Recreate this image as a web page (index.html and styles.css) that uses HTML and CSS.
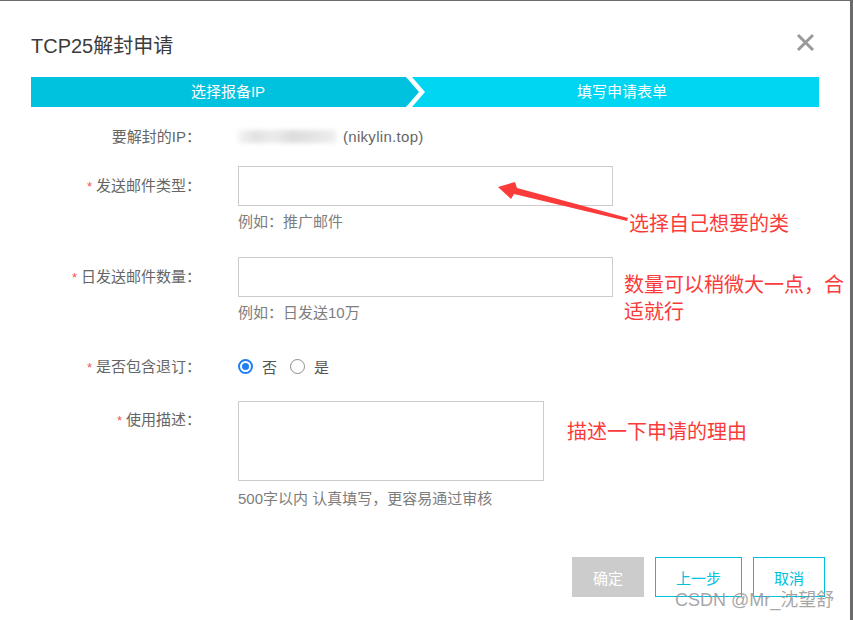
FILE: index.html
```html
<!DOCTYPE html>
<html lang="zh-CN">
<head>
<meta charset="utf-8">
<title>TCP25解封申请</title>
<link rel="stylesheet" href="styles.css">
</head>
<body>
<div class="dialog">
  <div class="header">
    <h1 class="title">TCP25解封申请</h1>
    <svg class="close" viewBox="0 0 19 19" width="19" height="19"><path d="M2 2L17 17M17 2L2 17" stroke="#9a9a9a" stroke-width="3" fill="none"/></svg>
  </div>

  <div class="steps">
    <svg class="steps-bg" width="788" height="30" viewBox="0 0 788 30">
      <polygon points="0,0 375,0 388,15 375,30 0,30" fill="#00c1de"/>
      <polygon points="375,0 381,0 394,15 381,30 375,30 388,15" fill="#ffffff"/>
    </svg>
    <div class="step">选择报备IP</div>
    <div class="step">填写申请表单</div>
  </div>

  <div class="form">
    <div class="row row-ip">
      <div class="label label-text">要解封的IP：</div>
      <div class="control control-ip"><span class="blur"></span><span class="host">(nikylin.top)</span></div>
    </div>

    <div class="row row-first">
      <div class="label"><span class="req">*</span>发送邮件类型：</div>
      <div class="control">
        <input class="input" type="text">
        <div class="hint">例如：推广邮件</div>
      </div>
    </div>

    <div class="row row-second">
      <div class="label"><span class="req">*</span>日发送邮件数量：</div>
      <div class="control">
        <input class="input" type="text">
        <div class="hint">例如：日发送10万</div>
      </div>
    </div>

    <div class="row row-radio">
      <div class="label label-text"><span class="req">*</span>是否包含退订：</div>
      <div class="control radios">
        <span class="radio checked"></span><span class="radio-text">否</span>
        <span class="radio"></span><span class="radio-text">是</span>
      </div>
    </div>

    <div class="row row-area">
      <div class="label label-area"><span class="req">*</span>使用描述：</div>
      <div class="control">
        <textarea class="textarea"></textarea>
        <div class="hint hint-area">500字以内 认真填写，更容易通过审核</div>
      </div>
    </div>
  </div>

  <div class="footer">
    <button class="btn btn-disabled">确定</button>
    <button class="btn btn-outline">上一步</button>
    <button class="btn btn-outline">取消</button>
  </div>

  <svg class="arrow" width="853" height="620" viewBox="0 1 853 620">
    <polygon points="498,188 515,183 517,189 628,219 627,222 514,195 511,200" fill="#fb3a3a"/>
  </svg>
  <div class="note note-1">选择自己想要的类</div>
  <div class="note note-2">数量可以稍微大一点，合<br>适就行</div>
  <div class="note note-3">描述一下申请的理由</div>
  <div class="watermark">CSDN @Mr_沈望舒</div>
</div>
</body>
</html>
```

FILE: styles.css
```css
html, body {
  margin: 0;
  padding: 0;
}

body {
  background: #6b6b6b;
  font-family: "Liberation Sans", "Noto Sans CJK SC", sans-serif;
  overflow: hidden;
  height: 620px;
}

.dialog {
  position: relative;
  width: 850px;
  height: 619px;
  margin-top: 1px;
  background: #ffffff;
}

.header {
  display: flex;
  justify-content: space-between;
  align-items: flex-start;
  padding: 31px 35px 0 31px;
}

.title {
  margin: 0;
  font-size: 20px;
  font-weight: normal;
  line-height: 28px;
  color: #3c3c3c;
}

.close {
  display: block;
  margin-top: 1px;
}

.steps {
  position: relative;
  display: flex;
  height: 30px;
  margin: 17px 31px 0;
  background: #00d6f2;
}

.steps-bg {
  position: absolute;
  left: 0;
  top: 0;
}

.step {
  position: relative;
  flex: 1;
  text-align: center;
  line-height: 30px;
  font-size: 15px;
  color: #ffffff;
}

.form {
  padding-top: 19px;
}

.row {
  display: flex;
  align-items: flex-start;
}

.row-first {
  margin-top: 19px;
}

.row-second {
  margin-top: 25px;
}

.row-radio {
  margin-top: 33px;
}

.row-area {
  margin-top: 24px;
}

.label {
  flex: none;
  width: 201px;
  text-align: right;
  font-size: 15px;
  line-height: 40px;
  color: #666666;
  white-space: nowrap;
}

.label-text {
  line-height: 21px;
  height: 21px;
}

.label-area {
  line-height: 20px;
  padding-top: 9px;
}

.req {
  color: #f25555;
  font-size: 13px;
  margin-right: 4px;
}

.control {
  margin-left: 37px;
}

.control-ip {
  display: flex;
  align-items: center;
  height: 21px;
  font-size: 15px;
  color: #666666;
}

.blur {
  display: inline-block;
  width: 98px;
  height: 13px;
  margin-right: 7px;
  background: linear-gradient(90deg, #f4f4f4 0%, #e2e2e2 18%, #ececec 36%, #dcdcdc 56%, #e4e4e4 76%, #efefef 100%);
  filter: blur(2px);
}

.host {
  line-height: 21px;
  letter-spacing: 0.3px;
}

.input {
  display: block;
  box-sizing: border-box;
  width: 375px;
  height: 40px;
  margin: 0;
  border: 1px solid #cccccc;
  background: #ffffff;
  outline: none;
}

.hint {
  margin-top: 6px;
  font-size: 15px;
  line-height: 20px;
  color: #7d7d7d;
  white-space: nowrap;
}

.hint-area {
  margin-top: 8px;
}

.radios {
  display: flex;
  align-items: center;
  height: 21px;
  font-size: 15px;
  color: #555555;
}

.radio {
  box-sizing: border-box;
  display: inline-block;
  width: 15px;
  height: 15px;
  border: 1px solid #8c8c8c;
  border-radius: 50%;
  background: #ffffff;
  position: relative;
}

.radio.checked {
  border: 2px solid #1f7ff0;
}

.radio.checked::after {
  content: "";
  position: absolute;
  left: 2px;
  top: 2px;
  width: 7px;
  height: 7px;
  border-radius: 50%;
  background: #1f7ff0;
}

.radio-text {
  margin-left: 9px;
  margin-right: 13px;
}

.textarea {
  display: block;
  box-sizing: border-box;
  width: 306px;
  height: 80px;
  margin: 0;
  border: 1px solid #cccccc;
  resize: none;
  outline: none;
}

.footer {
  display: flex;
  justify-content: flex-end;
  gap: 11px;
  margin-top: 48px;
  padding-right: 25px;
}

.btn {
  box-sizing: border-box;
  height: 40px;
  margin: 0;
  padding: 0;
  font-family: "Liberation Sans", "Noto Sans CJK SC", sans-serif;
  font-size: 15px;
  background: #ffffff;
  cursor: pointer;
}

.btn-disabled {
  width: 72px;
  border: none;
  background: #cccccc;
  color: #ffffff;
}

.btn-outline {
  width: 87px;
  border: 1px solid #00c1de;
  color: #00c1de;
}

.btn-outline:last-child {
  width: 72px;
}

.arrow {
  position: absolute;
  left: 0;
  top: -1px;
  pointer-events: none;
}

.note {
  position: absolute;
  font-size: 20px;
  line-height: 27px;
  color: #fb3a3a;
  white-space: nowrap;
}

.note-1 {
  left: 629px;
  top: 210px;
}

.note-2 {
  left: 624px;
  top: 271px;
}

.note-3 {
  left: 567px;
  top: 418px;
}

.watermark {
  position: absolute;
  left: 675px;
  top: 587px;
  font-size: 18px;
  line-height: 24px;
  color: rgba(150, 150, 150, 0.85);
  white-space: nowrap;
}
```
